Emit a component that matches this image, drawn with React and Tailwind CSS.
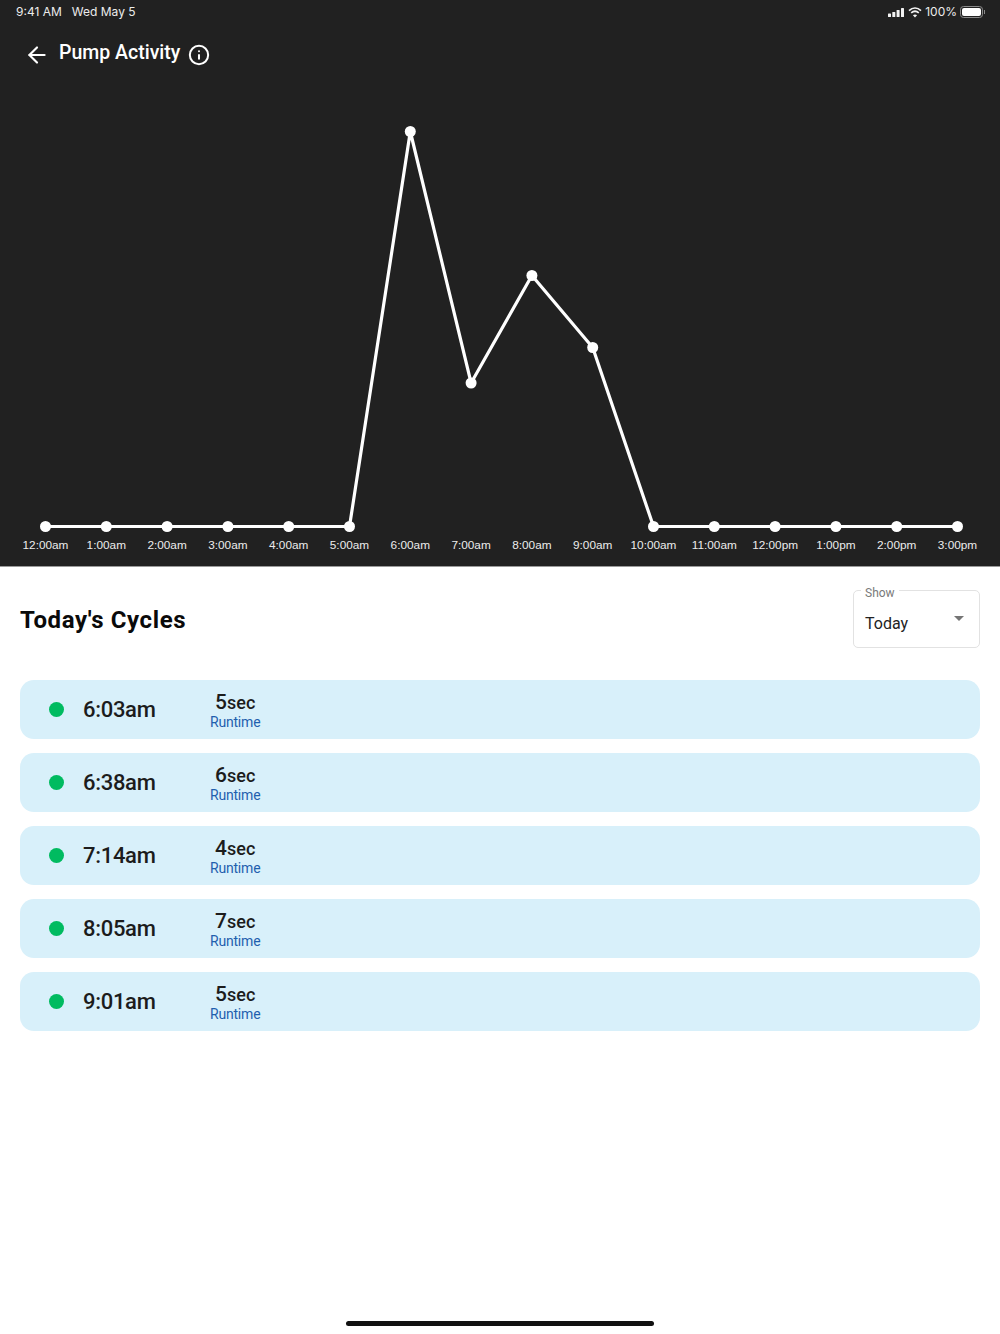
import React from 'react';
import { ArrowLeft, Info } from 'lucide-react';

const hours = ['12:00am', '1:00am', '2:00am', '3:00am', '4:00am', '5:00am', '6:00am', '7:00am', '8:00am', '9:00am', '10:00am', '11:00am', '12:00pm', '1:00pm', '2:00pm', '3:00pm'];
const values = [426.5, 426.5, 426.5, 426.5, 426.5, 426.5, 31.5, 283, 175.5, 247.5, 426.5, 426.5, 426.5, 426.5, 426.5, 426.5];
const points = values.map((y, i) => [45.5 + i * 60.8, y]);

const cycles = [
    { time: '6:03am', secs: 5 },
    { time: '6:38am', secs: 6 },
    { time: '7:14am', secs: 4 },
    { time: '8:05am', secs: 7 },
    { time: '9:01am', secs: 5 },
];

const StatusIcons = () => (
    <div className="flex items-center text-[12px] text-[#ececec] font-['Inter',sans-serif]">
        <svg width="16" height="9" viewBox="0 0 16 9" fill="#f2f2f2" className="mr-[4px]">
            <rect x="0" y="5.5" width="3" height="3.5" rx="0.6" />
            <rect x="4.3" y="4" width="3" height="5" rx="0.6" />
            <rect x="8.6" y="2" width="3" height="7" rx="0.6" />
            <rect x="13" y="0" width="3" height="9" rx="0.6" />
        </svg>
        <svg width="14" height="11" viewBox="0 0 14 11" fill="none" stroke="#f2f2f2" strokeWidth="1.7" className="mr-[3px]">
            <path d="M1 3.6C4.6 0.4 9.4 0.4 13 3.6" />
            <path d="M3.2 5.9C5.5 3.9 8.5 3.9 10.8 5.9" />
            <path d="M7 10.6L4.9 8.2C6.1 7.2 7.9 7.2 9.1 8.2Z" fill="#f2f2f2" stroke="none" />
        </svg>
        <span>100%</span>
        <div className="ml-[3px] flex items-center">
            <div className="h-[12px] w-[23px] rounded-[3.5px] border border-[#8a8a8a] p-[1px]">
                <div className="h-full w-full rounded-[2px] bg-white" />
            </div>
            <div className="ml-[1px] h-[4px] w-[1px] bg-[#8a8a8a]" />
        </div>
    </div>
);

const App = () => {
    return (
        <div className="flex h-[1334px] w-[1000px] flex-col bg-white font-['Roboto',sans-serif]">
            <div className="h-[567px] border-b border-[#9a9a9a] bg-[#212121]">
                <div className="flex h-[24px] items-center justify-between pl-[16px] pr-[15px]">
                    <div className="flex gap-[10px] text-[12px] text-[#ececec] font-['Inter',sans-serif]">
                        <span>9:41 AM</span>
                        <span>Wed May 5</span>
                    </div>
                    <StatusIcons />
                </div>
                <div className="mt-[4px] flex h-[54px] items-center pl-[24px] text-white">
                    <ArrowLeft size={26} strokeWidth={2} className="-mt-[1px]" />
                    <span className="ml-[9px] -mt-[4px] text-[19.5px] font-medium">Pump Activity</span>
                    <Info size={22} strokeWidth={2.2} className="ml-[8px]" />
                </div>
                <svg width="1000" height="440" viewBox="0 0 1000 440" className="mt-[18px] block">
                    <polyline points={points.map((p) => p.join(',')).join(' ')} fill="none" stroke="white" strokeWidth="3.2" />
                    {points.map(([x, y], i) => (
                        <circle key={i} cx={x} cy={y} r="5.5" fill="white" />
                    ))}
                </svg>
                <div className="-mt-[4px] grid grid-cols-16 pl-[15.1px] pr-[12.1px] text-center text-[11.8px] leading-[18px] text-[#ececec] font-['Liberation_Sans',sans-serif]">
                    {hours.map((h) => (
                        <span key={h} className="whitespace-nowrap">{h}</span>
                    ))}
                </div>
            </div>

            <div className="flex h-[113px] items-start justify-between px-[20px]">
                <h2 className="mt-[36px] text-[24px] font-bold leading-[34px] tracking-[0.6px] text-[#0a0a0a]">Today's Cycles</h2>
                <div className="relative mt-[23px] h-[58px] w-[127px] rounded-[5px] border border-[#e2e2e2]">
                    <span className="absolute -top-[5px] left-[7px] bg-white px-[4px] text-[12px] leading-[14px] text-[#7a7a7a]">Show</span>
                    <span className="absolute left-[11px] top-[22px] text-[16px] leading-[22px] text-[#222222]">Today</span>
                    <div className="absolute right-[15px] top-[25px] h-0 w-0 border-x-[5px] border-t-[5px] border-x-transparent border-t-[#757575]" />
                </div>
            </div>

            <div className="flex flex-col gap-[14px] px-[20px]">
                {cycles.map((c) => (
                    <div key={c.time} className="flex h-[59px] items-center rounded-[14px] bg-[#d8f0fa]">
                        <div className="ml-[29px] h-[15px] w-[15px] rounded-full bg-[#00bb60]" />
                        <div className="ml-[19px] w-[127px] text-[22px] font-medium tracking-[-0.3px] text-[#1c1c1c]">{c.time}</div>
                        <div className="flex flex-col items-center">
                            <div className="mt-[1px] leading-[24px] text-[#1c1c1c]">
                                <span className="text-[21px] font-medium">{c.secs}</span>
                                <span className="text-[18px] font-medium">sec</span>
                            </div>
                            <div className="-mt-[2px] pb-[1px] text-[14px] leading-[16px] tracking-[-0.2px] text-[#1f5fae]">Runtime</div>
                        </div>
                    </div>
                ))}
            </div>

            <div className="mt-auto mb-[8px] h-[5px] w-[308px] self-center rounded-full bg-[#111111]" />
        </div>
    );
};

export default App;
